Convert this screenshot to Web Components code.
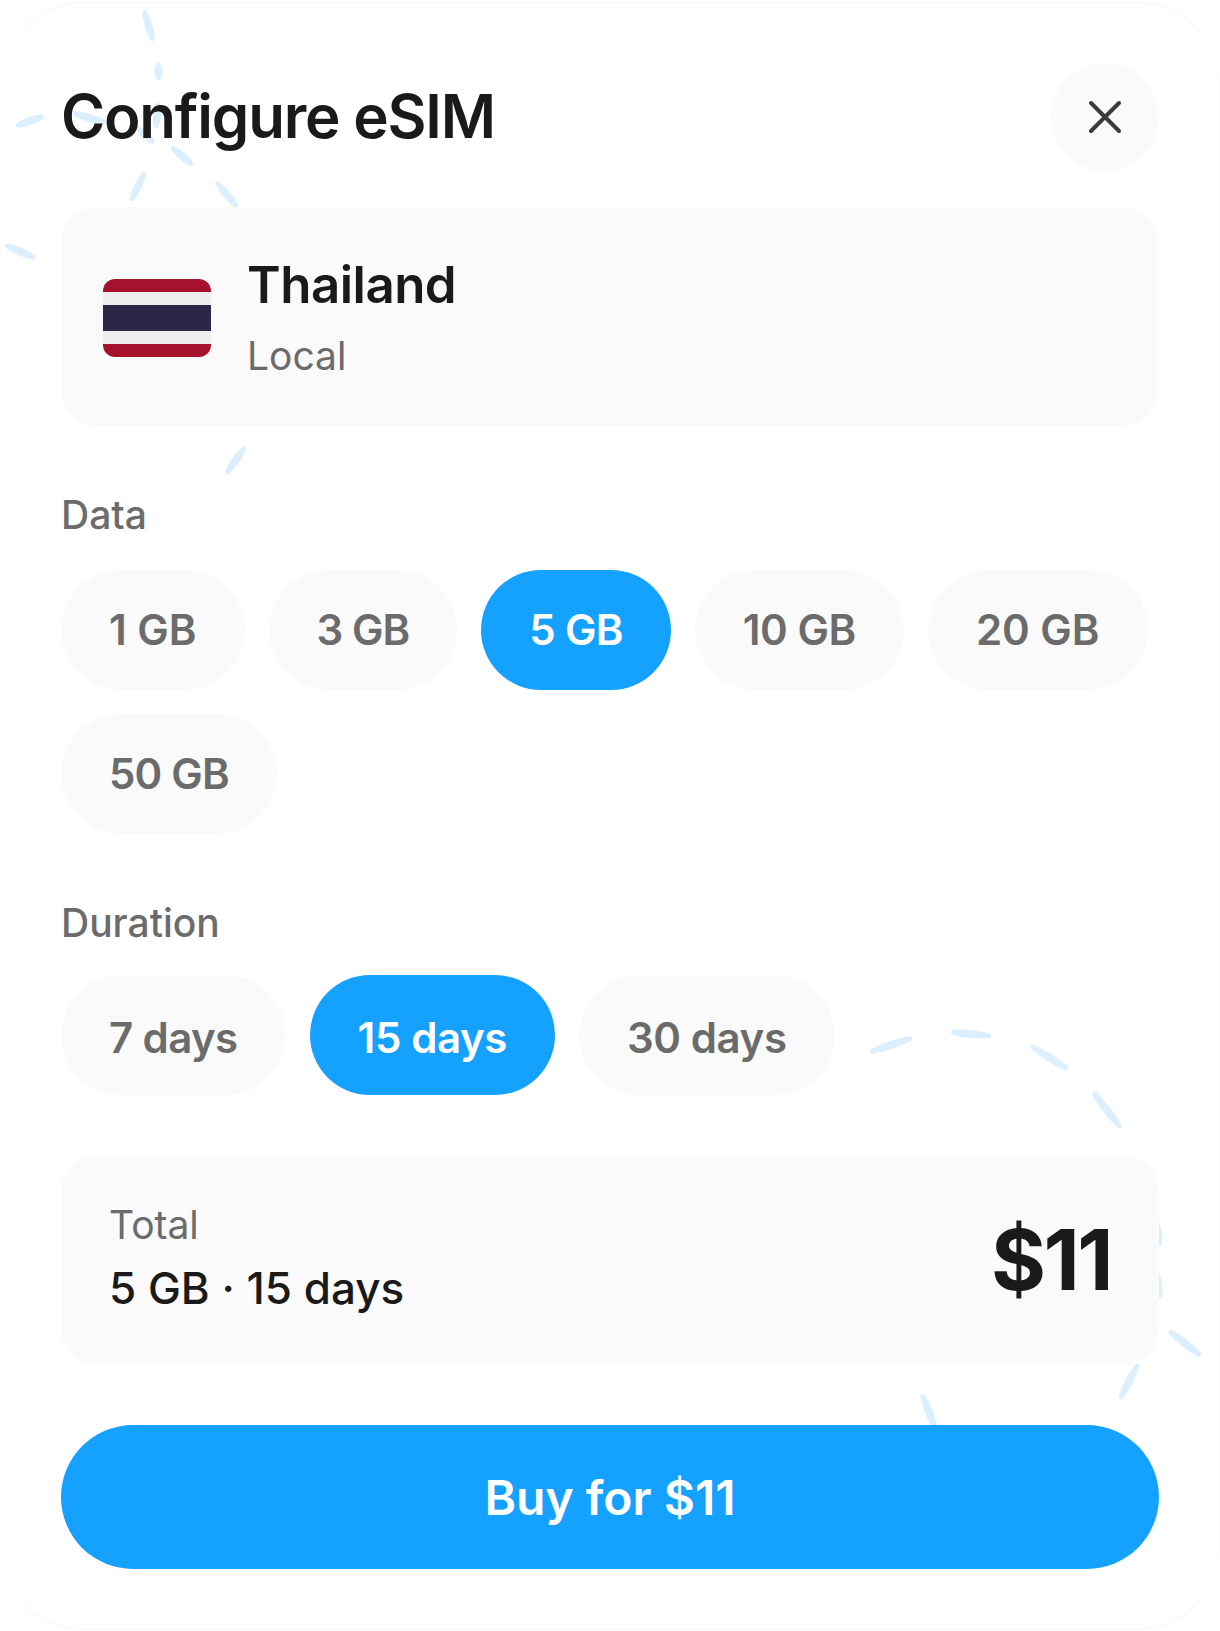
<!DOCTYPE html>
<html lang="en">
<head>
<meta charset="utf-8">
<title>Configure eSIM</title>
<style>
  html, body { margin: 0; background: #fff; }
  body { font-family: Inter, "Liberation Sans", sans-serif; color: #1a1a1a; }
  /* the two groups don't sit their chip text quite the same */
  #data { --chip-top: 0; --chip-bottom: 2px; }
  #duration { --chip-top: 4px; --chip-bottom: 0; }
</style>
</head>
<body>
<esim-sheet>
  <sheet-header>Configure eSIM</sheet-header>
  <plan-card name="Thailand" kind="Local"></plan-card>
  <option-group id="data" label="Data" gap-top="67" gap-chips="33">
    <option-chip style="--chip-spacing: 0">1 GB</option-chip>
    <option-chip style="--chip-spacing: -0.9px">3 GB</option-chip>
    <option-chip selected style="--chip-spacing: -0.7px">5 GB</option-chip>
    <option-chip>10 GB</option-chip>
    <option-chip style="--chip-spacing: 0">20 GB</option-chip>
    <option-chip style="--chip-spacing: -0.8px">50 GB</option-chip>
  </option-group>
  <option-group id="duration" label="Duration" gap-top="67" gap-chips="30">
    <option-chip style="--chip-spacing: -0.6px">7 days</option-chip>
    <option-chip selected>15 days</option-chip>
    <option-chip>30 days</option-chip>
  </option-group>
  <total-card summary="5 GB · 15 days" price="$11"></total-card>
  <buy-button>Buy for $11</buy-button>
</esim-sheet>

<script>
class EsimSheet extends HTMLElement {
  constructor() {
    super();
    this.attachShadow({ mode: "open" });
    // the dashes of the background trail, [x1, y1, x2, y2]
    let dashes = [
      [144, 10, 153, 41], [158, 63, 159, 80], [158, 103, 156, 128],
      [16, 126, 44, 116], [73, 113, 106, 123], [137, 127, 154, 143],
      [171, 147, 193, 165], [145, 172, 131, 201], [216, 182, 238, 208],
      [5, 245, 35, 258], [245, 447, 226, 474],
      [870, 1052, 912, 1038], [951, 1032, 991, 1036], [1031, 1046, 1068, 1069],
      [1093, 1092, 1121, 1128], [1156, 1220, 1160, 1246], [1156, 1270, 1160, 1298],
      [1169, 1331, 1201, 1356], [1138, 1364, 1120, 1399], [922, 1394, 936, 1430]
    ];
    // slightly lens shaped, the dashes thin out towards their ends
    let shapes = dashes.map(d => {
      let dx = d[2] - d[0], dy = d[3] - d[1];
      let len = Math.hypot(dx, dy);
      let ux = dx / len, uy = dy / len;
      let x1 = d[0] + ux * 2.5, y1 = d[1] + uy * 2.5, x2 = d[2] - ux * 2.5, y2 = d[3] - uy * 2.5;
      let mx = (x1 + x2) / 2, my = (y1 + y2) / 2;
      let nx = -uy * 3, ny = ux * 3;
      return `<path d="M${x1} ${y1}Q${mx + nx} ${my + ny} ${x2} ${y2}Q${mx - nx} ${my - ny} ${x1} ${y1}Z"/>`;
    }).join("");
    this.shadowRoot.innerHTML = `
      <style>
        :host { display: block; position: relative; height: 1631px; overflow: hidden; }
        .sheet {
          position: relative;
          box-sizing: border-box;
          height: 1628px;
          margin-top: 2px;
          padding: 60px 60px 0;
          border: 1px solid #fbfbfb;
          border-top-color: #f5f5f5;
          border-bottom-color: #f5f5f5;
          border-radius: 84px;
          display: flex;
          flex-direction: column;
        }
        svg { position: absolute; left: 0; top: 0; }
        path { fill: #dbefff; stroke: #dbefff; stroke-width: 5; stroke-linejoin: round; }
        .content { position: relative; display: flex; flex-direction: column; }
      </style>
      <svg width="1220" height="1631" viewBox="0 0 1220 1631" aria-hidden="true">${shapes}</svg>
      <div class="sheet"><div class="content"><slot></slot></div></div>
    `;
  }
}
customElements.define("esim-sheet", EsimSheet);

class SheetHeader extends HTMLElement {
  constructor() {
    super();
    this.attachShadow({ mode: "open" });
    this.shadowRoot.innerHTML = `
      <style>
        :host { display: flex; align-items: center; justify-content: space-between; height: 108px; }
        h1 { margin: 0; font-size: 60px; font-weight: 600; letter-spacing: -1.2px; line-height: 72px; color: #1a1a1a; padding-bottom: 2px; }
        button {
          width: 108px; height: 108px; padding: 0; border: 0; border-radius: 50%;
          background: #fafafa; display: flex; align-items: center; justify-content: center;
        }
      </style>
      <h1><slot></slot></h1>
      <button aria-label="Close">
        <svg width="36" height="36" viewBox="0 0 36 36" fill="none" stroke="#3a3a3a" stroke-width="4" stroke-linecap="round">
          <path d="M4 4L32 32M32 4L4 32"/>
        </svg>
      </button>
    `;
  }
}
customElements.define("sheet-header", SheetHeader);

class PlanCard extends HTMLElement {
  constructor() {
    super();
    this.attachShadow({ mode: "open" });
  }
  connectedCallback() {
    this.shadowRoot.innerHTML = `
      <style>
        :host {
          display: flex; align-items: center; gap: 36px;
          margin-top: 36px; height: 219px; box-sizing: border-box;
          padding: 0 42px; background: #fafafa; border-radius: 36px;
        }
        .flag { width: 108px; height: 78px; border-radius: 12px; overflow: hidden; display: flex; flex-direction: column; flex: none; margin-top: 3px; }
        .flag i { display: block; flex: 1; }
        .flag .r { background: #a6122e; }
        .flag .w { background: #eeeeee; }
        .flag .b { background: #2c2747; flex: 2; }
        .name { font-size: 51px; font-weight: 600; line-height: 60px; letter-spacing: -0.5px; color: #1a1a1a; }
        .kind { font-size: 39px; font-weight: 400; line-height: 44px; margin-top: 19px; color: #6b6b6b; }
      </style>
      <div class="flag"><i class="r"></i><i class="w"></i><i class="b"></i><i class="w"></i><i class="r"></i></div>
      <div>
        <div class="name">${this.getAttribute("name")}</div>
        <div class="kind">${this.getAttribute("kind")}</div>
      </div>
    `;
  }
}
customElements.define("plan-card", PlanCard);

class OptionGroup extends HTMLElement {
  constructor() {
    super();
    this.attachShadow({ mode: "open" });
  }
  connectedCallback() {
    this.shadowRoot.innerHTML = `
      <style>
        :host { display: block; margin-top: ${this.getAttribute("gap-top")}px; }
        .label { font-size: 39px; font-weight: 500; line-height: 44px; color: #6b6b6b; }
        .chips { display: flex; flex-wrap: wrap; gap: 24px; margin-top: ${this.getAttribute("gap-chips")}px; }
      </style>
      <div class="label">${this.getAttribute("label")}</div>
      <div class="chips"><slot></slot></div>
    `;
  }
}
customElements.define("option-group", OptionGroup);

class OptionChip extends HTMLElement {
  constructor() {
    super();
    this.attachShadow({ mode: "open" });
    this.shadowRoot.innerHTML = `
      <style>
        :host {
          display: flex; align-items: center; height: 120px; box-sizing: border-box;
          padding: var(--chip-top, 0) 48px var(--chip-bottom, 0); border-radius: 60px;
          background: #fafafa; color: #6b6b6b;
          font-size: 42px; font-weight: 600; letter-spacing: var(--chip-spacing, -0.4px);
        }
        :host([selected]) { background: #14a1ff; color: #fff; }
      </style>
      <slot></slot>
    `;
  }
}
customElements.define("option-chip", OptionChip);

class TotalCard extends HTMLElement {
  constructor() {
    super();
    this.attachShadow({ mode: "open" });
  }
  connectedCallback() {
    this.shadowRoot.innerHTML = `
      <style>
        :host {
          display: flex; align-items: center; justify-content: space-between;
          margin-top: 60px; height: 210px; box-sizing: border-box;
          padding: 0 48px; background: #fafafa; border-radius: 36px;
        }
        .info { padding-bottom: 4px; }
        .label { font-size: 39px; line-height: 44px; color: #6b6b6b; }
        .summary { font-size: 44px; font-weight: 500; line-height: 52px; margin-top: 15px; color: #1a1a1a; }
        .price { font-size: 84px; font-weight: 700; letter-spacing: -2.5px; color: #1a1a1a; padding-bottom: 2px; }
      </style>
      <div class="info">
        <div class="label">Total</div>
        <div class="summary">${this.getAttribute("summary")}</div>
      </div>
      <div class="price">${this.getAttribute("price")}</div>
    `;
  }
}
customElements.define("total-card", TotalCard);

class BuyButton extends HTMLElement {
  constructor() {
    super();
    this.attachShadow({ mode: "open" });
    this.shadowRoot.innerHTML = `
      <style>
        :host {
          display: flex; align-items: center; justify-content: center;
          margin-top: 60px; height: 144px; border-radius: 72px;
          background: #14a1ff; color: #fff; font-size: 48px; font-weight: 600;
        }
      </style>
      <slot></slot>
    `;
  }
}
customElements.define("buy-button", BuyButton);
</script>
</body>
</html>
